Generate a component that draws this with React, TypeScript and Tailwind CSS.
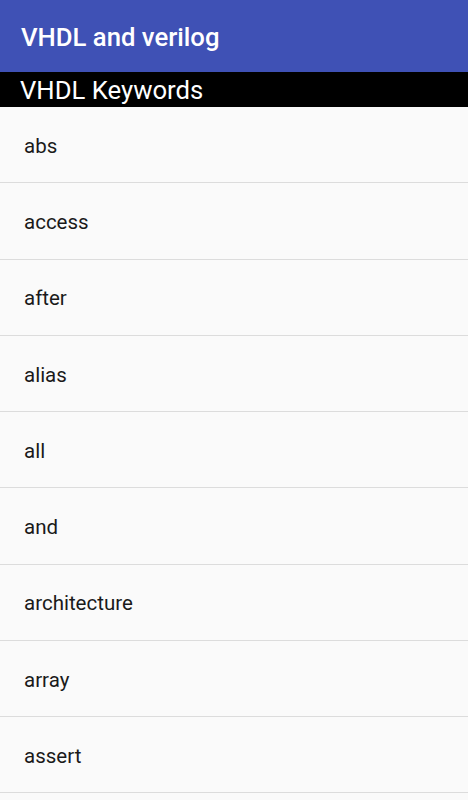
import React from "react";

const items = ["abs", "access", "after", "alias", "all", "and", "architecture", "array", "assert"];

export default function App() {
  return (
    <div className="w-[468px] h-[800px] overflow-hidden bg-[#fafafa] flex flex-col" style={{ fontFamily: "Roboto, 'Liberation Sans', sans-serif" }}>
      <div className="h-[72px] shrink-0 bg-[#3f51b5] flex items-center pl-[21px]">
        <span className="text-white text-[25.7px] font-medium leading-none pt-[3px]">VHDL and verilog</span>
      </div>
      <div className="h-[35px] shrink-0 bg-black flex items-center pl-[20px]">
        <span className="text-white text-[25.7px] leading-none pt-[3px]">VHDL Keywords</span>
      </div>
      <div className="flex flex-col shrink-0">
        {items.map((it) => (
          <div key={it} className="h-[76.25px] shrink-0 box-border border-b border-[#dcdcdc] flex items-center pl-[24px]">
            <span className="text-[20.5px] text-[#1a1a1a] leading-none pt-[3px]">{it}</span>
          </div>
        ))}
      </div>
    </div>
  );
}
